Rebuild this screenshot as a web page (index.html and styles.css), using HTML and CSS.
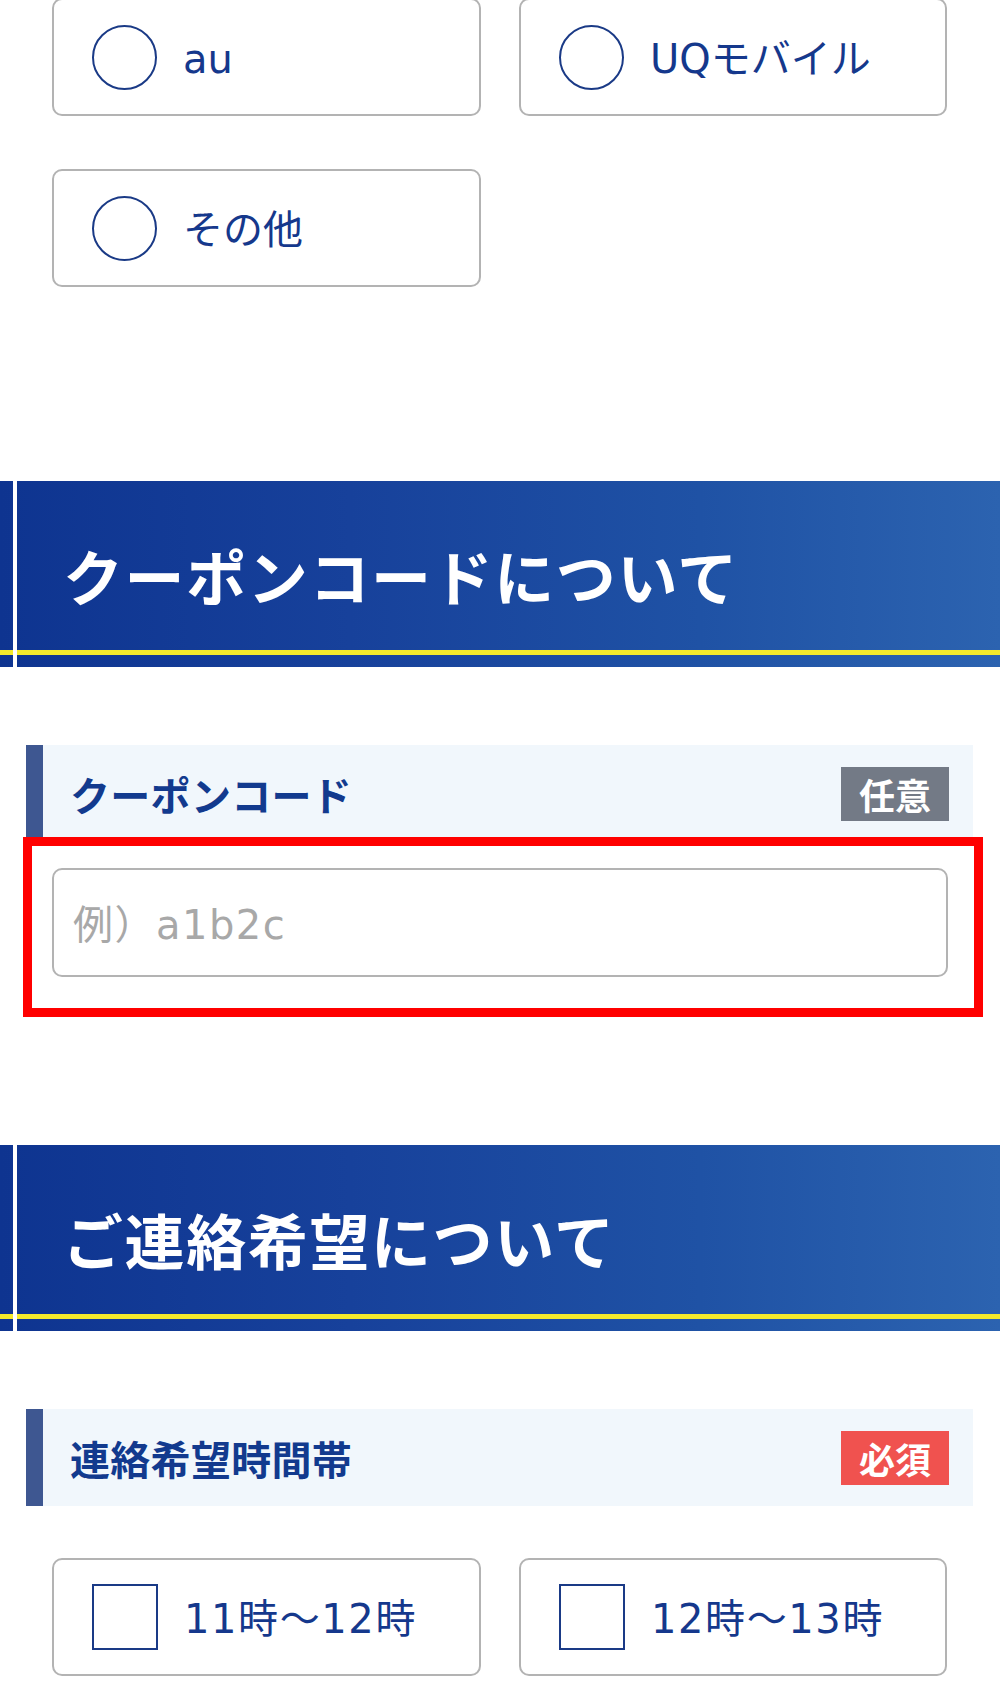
FILE: index.html
```html
<!DOCTYPE html>
<html lang="ja">
<head>
<meta charset="utf-8">
<title>フォーム</title>
<link rel="stylesheet" href="styles.css">
</head>
<body>
<div class="page">
  <div class="choices choices-top">
    <label class="choice"><span class="radio"></span><span class="choice-text">au</span></label>
    <label class="choice"><span class="radio"></span><span class="choice-text">UQモバイル</span></label>
    <label class="choice"><span class="radio"></span><span class="choice-text">その他</span></label>
  </div>

  <section class="sec">
    <div class="sec-head">
      <h2 class="sec-title">クーポンコードについて</h2>
      <div class="sec-line"></div>
    </div>
    <div class="field-label">
      <span class="field-name">クーポンコード</span>
      <span class="badge badge-opt">任意</span>
    </div>
    <div class="input-wrap">
      <input class="text-input" type="text" placeholder="例）a1b2c">
      <div class="annot"></div>
    </div>
  </section>

  <section class="sec sec-contact">
    <div class="sec-head">
      <h2 class="sec-title">ご連絡希望について</h2>
      <div class="sec-line"></div>
    </div>
    <div class="field-label">
      <span class="field-name">連絡希望時間帯</span>
      <span class="badge badge-req">必須</span>
    </div>
    <div class="choices choices-time">
      <label class="choice"><span class="check"></span><span class="choice-text time-text">11時～12時</span></label>
      <label class="choice"><span class="check"></span><span class="choice-text time-text">12時～13時</span></label>
    </div>
  </section>
</div>
</body>
</html>
```

FILE: styles.css
```css
* { box-sizing: border-box; }

html, body {
  margin: 0;
  padding: 0;
  background: #ffffff;
}

body {
  font-family: "Noto Sans CJK JP", "Noto Sans", sans-serif;
  color: #15388c;
  width: 1000px;
  height: 1685px;
  overflow: hidden;
}

.page {
  display: flex;
  flex-direction: column;
}

.choices {
  display: grid;
  grid-template-columns: 429px 428px;
  column-gap: 38px;
  row-gap: 53px;
  padding: 0 53px 0 52px;
}

.choices-top {
  margin-top: -2px;
}

.choice {
  height: 118px;
  border: 2px solid #b3b3b3;
  border-radius: 10px;
  background: #ffffff;
  display: flex;
  align-items: center;
  padding-left: 38px;
  gap: 26px;
}

.radio {
  width: 65px;
  height: 65px;
  border: 2px solid #1a3a86;
  border-radius: 50%;
  flex: none;
}

.check {
  width: 66px;
  height: 66px;
  border: 2px solid #1a3a86;
  flex: none;
}

.choice-text {
  font-family: "DejaVu Sans", "Noto Sans CJK JP", sans-serif;
  font-size: 40px;
  line-height: 40px;
  color: #15388c;
  padding-top: 3px;
}

.time-text {
  letter-spacing: 1.6px;
}

.sec {
  margin-top: 194px;
  display: flex;
  flex-direction: column;
}

.sec-contact {
  margin-top: 168px;
}

.sec-head {
  position: relative;
  height: 186px;
  background: linear-gradient(90deg, #0e3490 0%, #17419b 35%, #1f52a5 70%, #2c63b0 100%);
  display: flex;
  flex-direction: column;
}

.sec-head::before {
  content: "";
  position: absolute;
  left: 13px;
  top: 0;
  bottom: 0;
  width: 4px;
  background: #ffffff;
  z-index: 2;
}

.sec-title {
  margin: 0;
  height: 169px;
  padding: 64px 0 0 63px;
  font-size: 60px;
  line-height: 60px;
  font-weight: 700;
  color: #ffffff;
  letter-spacing: 1.6px;
}

.sec-line {
  height: 5px;
  background: #f4ea2c;
}

.field-label {
  margin: 78px 27px 0 26px;
  height: 97px;
  background: #f1f7fc;
  border-left: 17px solid #3e5791;
  display: flex;
  align-items: center;
  justify-content: space-between;
  padding: 0 24px 0 27px;
}

.field-name {
  font-size: 40px;
  line-height: 40px;
  font-weight: 700;
  color: #123a8e;
  letter-spacing: 0.3px;
}

.badge {
  width: 108px;
  height: 54px;
  display: flex;
  align-items: center;
  justify-content: center;
  font-size: 36px;
  line-height: 36px;
  font-weight: 700;
  color: #ffffff;
}

.badge-opt { background: #737a86; }
.badge-req { background: #f0524f; }

.input-wrap {
  position: relative;
  margin: 26px 52px 0 52px;
}

.text-input {
  display: block;
  width: 896px;
  height: 109px;
  border: 2px solid #b3b3b3;
  border-radius: 10px;
  padding: 4px 0 0 19px;
  font-family: "DejaVu Sans", "Noto Sans CJK JP", sans-serif;
  font-size: 40px;
  letter-spacing: 1.5px;
  color: #333333;
  background: #ffffff;
  outline: none;
}

.text-input::placeholder {
  color: #a8a8a8;
}

.annot {
  position: absolute;
  left: -29px;
  right: -35px;
  top: -31px;
  bottom: -40px;
  border: 9px solid #ff0000;
  pointer-events: none;
  z-index: 3;
}

.choices-time {
  margin-top: 52px;
}
```
